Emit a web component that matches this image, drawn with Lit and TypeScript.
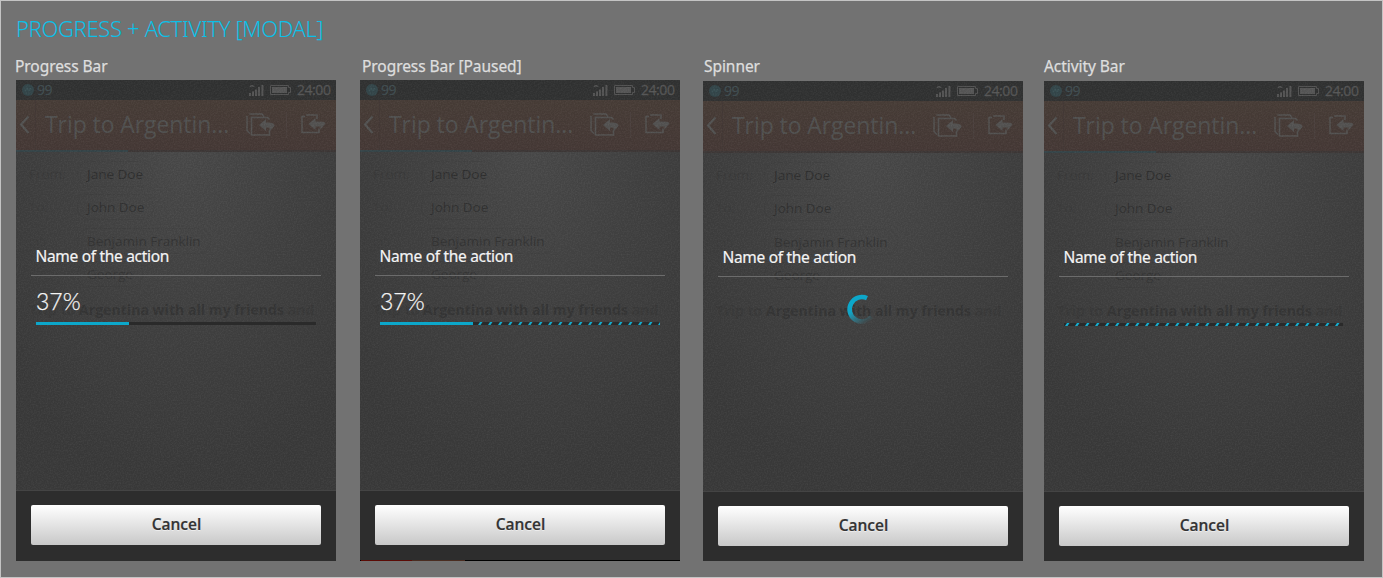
import { LitElement, html, css, svg, nothing } from "lit";
import { customElement, property } from "lit/decorators.js";

type Kind = "progress" | "paused" | "spinner" | "activity";

@customElement("mail-screen")
class MailScreen extends LitElement {
  @property({ type: Boolean }) loading = false;

  static styles = css`
    :host { display: block; height: 100%; background: radial-gradient(ellipse 230px 330px at 52% 17%, #4b4b4b 0%, #424242 50%, #3b3b3b 100%); font-family: "Open Sans", sans-serif; }
    .status { height: 20px; box-sizing: border-box; background: #323333; display: flex; align-items: center; padding: 0 5px 0 6px; font-size: 14px; line-height: 19px; color: #575757; }
    .coin { width: 12px; height: 12px; display: block; margin-right: 3px; }
    .count { color: #425054; flex: 1; letter-spacing: -0.4px; position: relative; top: -1px; -webkit-text-stroke: 0.2px #425054; }
    .signal { width: 15px; height: 12px; margin-right: 6px; }
    .battery { width: 22px; height: 10px; margin-right: 5px; }
    .clock { letter-spacing: -0.45px; width: 34px; white-space: nowrap; position: relative; top: -1px; -webkit-text-stroke: 0.3px #575757; }
    .header { height: 50px; display: flex; align-items: center; background: linear-gradient(#493e38, #473a37); color: #535352; }
    .back { width: 19px; height: 50px; border-right: 1px solid #443936; flex: none; }
    .subject { margin: 0; padding-left: 9px; width: 192px; box-sizing: content-box; font-weight: 400; font-size: 23px; line-height: 48px; height: 50px; white-space: nowrap; letter-spacing: -0.08px; }
    .tools { width: 92px; height: 50px; flex: none; }
    .load { height: 2px; background: #3f3938; }
    .loaded { width: 112px; height: 2px; background: #37464a; }
    .rows { padding: 5px 0 0 13px; font-size: 13.5px; }
    .row { display: flex; height: 33.5px; align-items: center; color: #3d3d3d; }
    .tag { width: 48px; color: #3d3d3d; }
    .pill { border: 1px solid #00000008; border-radius: 12px; padding: 0 9px; line-height: 24px; }
    .n0 { color: #303030; } .n1 { color: #323232; } .n2 { color: #353535; } .n3 { color: #373737; }
    .first { color: #3b3b3b; }
    .message { margin: 0; padding-top: 5px; font-size: 14px; font-weight: 700; line-height: 28px; color: #363636; white-space: nowrap; letter-spacing: 0.05px; }
    .faint { color: #3a3a3a; }
  `;

  render() {
    const rows = [["From:", "Jane Doe"], ["To:", "John Doe"], ["cc:", "Benjamin Franklin"], ["", "George"]];
    return html`
      <div class="status">
        <svg class="coin" viewBox="0 0 12 12"><circle cx="6" cy="6" r="6" fill="#35484c" /><path d="M3 7.5 5 4l2 3 2-3" fill="none" stroke="#3c5458" /></svg>
        <span class="count">99</span>
        <svg class="signal" viewBox="0 0 15 12" fill="#575757"><path d="M0 3.2Q3-1.8 6 3.2L3 2.6Z" /><path d="M0 9h2v3H0zM3 7.5h2V12H3zM6 5.5h2V12H6zM9 3h2v9H9zM12.4 1h2v11h-2z" /></svg>
        <svg class="battery" viewBox="0 0 22 10"><path d="M.5.5h18v2h2v5h-2v2H.5z" fill="none" stroke="#555" /><path d="M2 2h15v6H2z" fill="#585858" /></svg>
        <span class="clock">24:00</span>
      </div>
      <div class="header">
        <svg class="back" viewBox="0 0 19 50"><path d="M12.500 16.500 5 24.600 12.500 33" fill="none" stroke="#555554" stroke-width="2.200" /></svg>
        <h2 class="subject">Trip to Argentin...</h2>
        <svg class="tools" viewBox="221 0 92 50" fill="none" stroke="#555453" stroke-width="1.500">
          <path d="M231 16v14.500l3 3M233.500 14h12.500l2 2.500M253.500 19.500l-2-2H235.500v17.500h18v-5" />
          <path d="m243 25 7-6v3.600q9-.5 8.500 3.500l-5 5.500V27.500h-3.500V31z" fill="#555453" stroke="none" />
          <path d="M270.500 12v26" stroke="#4d423f" stroke-width="1" />
          <path d="M301 19v-4H290M289 16.500h-3V32.500h17v-4" />
          <path d="m292.500 24 7-6v3.600q10-.5 10 2l-5 6v-3.100h-5V30z" fill="#555453" stroke="none" />
        </svg>
      </div>
      ${this.loading ? html`<div class="load"><div class="loaded"></div></div>` : html`<div class="load"></div>`}
      <div class="rows">
        ${rows.map(([tag, name], i) => html`<div class="row"><span class="tag ${i === 0 ? "first" : ""}">${tag}</span><span class="pill n${i}">${name}</span></div>`)}
        <p class="message"><span class="faint">Trip to</span> Argentina with all my friends <span class="faint">and</span></p>
      </div>`;
  }
}

@customElement("modal-card")
class ModalCard extends LitElement {
  @property() kind: Kind = "progress";

  static styles = css`
    :host { display: block; position: relative; width: 320px; height: 100%; overflow: hidden; background: #2d2d2d; font-family: "Noto Sans", sans-serif; }
    .screen { height: 410px; overflow: hidden; }
    .grain { position: absolute; inset: 0; width: 320px; height: 410px; opacity: 0.04; }
    .modal { position: absolute; inset: 0; display: flex; flex-direction: column; }
    .body { height: 410px; box-sizing: border-box; padding: 166px 15px 0; }
    .name { height: 29px; border-bottom: 1px solid #6c6c6c; padding-left: 4.500px; font-size: 15.500px; line-height: 21px; color: #f4f4f4; font-weight: 400; margin: 0; white-space: nowrap; letter-spacing: -0.31px; -webkit-text-stroke: 0.2px #f4f4f4; }
    .percent { padding: 10px 0 0 5px; height: 36px; line-height: 30px; font-family: Lato, sans-serif; font-weight: 300; font-size: 23px; color: #f4f4f4; letter-spacing: 0; -webkit-text-stroke: 0.25px #f4f4f4; }
    .bar { display: block; width: 280px; height: 3px; margin-left: 5px; }
    .spin { display: block; width: 32px; height: 32px; margin: 16px 0 0 127px; }
    .footer { border-top: 1px solid #444; background: #2d2d2d; padding: 14px 15px 0; flex: 1; }
    .cancel { display: block; width: 290px; height: 40px; border: 0; border-radius: 2px; background: linear-gradient(#fff, #c8c8c8); color: #333; font: 600 15.500px/38px "Open Sans", sans-serif; letter-spacing: 0; padding: 0 0 2px 1px; text-shadow: 0 1px 0 #ffffff80; -webkit-text-stroke: 0.2px #333; }
    .sliver { display: flex; height: 1px; background: #000; }
    .red { width: 51px; margin-left: 1px; background: #5b0b05; }
    .brown { width: 53px; background: #4a2c20; }
  `;

  private bar(fill: number, stripes: number | null, length = 280) {
    return html`<svg class="bar" viewBox="0 0 280 3">
      <rect width=${length} height="3" fill="#2a2a2a" />
      ${stripes === null ? nothing : Array.from({ length: Math.ceil((length - stripes) / 10) }, (_, i) => {
        const x = stripes + i * 10;
        return svg`<path d="M${x} 3 ${x + 2} 0h2.500l-2 3z" fill="#14aed0" />`;
      })}
      ${fill ? svg`<rect width=${fill} height="3" fill="#0ca7ca" />` : nothing}
    </svg>`;
  }

  private indicator() {
    switch (this.kind) {
      case "progress": return html`<div class="percent">37%</div>${this.bar(93, null)}`;
      case "paused": return html`<div class="percent">37%</div>${this.bar(93, 98)}`;
      case "activity": return html`<div class="percent"></div>${this.bar(0, 1, 279)}`;
      default: return html`<svg class="spin" viewBox="0 0 32 32">
        <defs><linearGradient id="fade" gradientUnits="userSpaceOnUse" x1="12" y1="8" x2="26" y2="28"><stop offset="0" stop-color="#0ca7ca" /><stop offset=".25" stop-color="#13a3c4" /><stop offset="1" stop-color="#3b8a9c" stop-opacity="0" /></linearGradient></defs>
        <path d="M22 5.100A12.300 12.300 0 1 0 26.500 24" fill="none" stroke="url(#fade)" stroke-width="4.600" />
      </svg>`;
    }
  }

  render() {
    return html`
      <div class="screen"><mail-screen ?loading=${this.kind !== "spinner"}></mail-screen></div>
      <svg class="grain"><filter id="noise" x="0" y="0" width="100%" height="100%" color-interpolation-filters="sRGB"><feTurbulence type="fractalNoise" baseFrequency="0.7" numOctaves="2" /><feColorMatrix type="matrix" values="2 0 0 0 -0.75  2 0 0 0 -0.75  2 0 0 0 -0.75  0 0 0 0 1" /></filter><rect width="320" height="410" filter="url(#noise)" /></svg>
      <div class="modal">
        <div class="body"><h3 class="name">Name of the action</h3>${this.indicator()}</div>
        <div class="footer"><button class="cancel">Cancel</button></div>
        ${this.kind === "paused" ? html`<div class="sliver"><div class="red"></div><div class="brown"></div></div>` : nothing}
      </div>`;
  }
}

@customElement("app-root")
class AppRoot extends LitElement {
  static styles = css`
    :host { display: block; box-sizing: border-box; width: 1383px; height: 578px; border: 1px solid #c4c4c4; background: #727272; font-family: "Noto Sans", sans-serif; overflow: hidden; }
    .title { margin: 0; padding: 11px 0 0 15px; height: 32px; line-height: 32px; font-size: 22px; font-weight: 300; color: #0cc0e8; white-space: nowrap; letter-spacing: -0.34px; }
    .gallery { display: grid; grid-template-columns: 344px 343px 341px 320px; padding-left: 15px; }
    .item { display: flex; flex-direction: column; height: 517px; }
    .label { margin: 0; height: 36px; line-height: 44px; font-size: 15.500px; font-weight: 400; color: #dedede; white-space: nowrap; letter-spacing: -0.06px; -webkit-text-stroke: 0.25px #dedede; }
    .low .label { height: 37px; }
    .card { height: 481px; }
    .low .card { height: 480px; }
    .progress { margin-left: -1px; } .paused { margin-left: 2px; } .spinner { margin-left: 1px; }
  `;

  render() {
    const items: [Kind, string][] = [["progress", "Progress Bar"], ["paused", "Progress Bar [Paused]"], ["spinner", "Spinner"], ["activity", "Activity Bar"]];
    return html`
      <h1 class="title">PROGRESS + ACTIVITY [MODAL]</h1>
      <div class="gallery">
        ${items.map(([kind, label], i) => html`<section class="item ${i > 1 ? "low" : ""}"><h2 class="label ${kind}">${label}</h2><div class="card"><modal-card .kind=${kind}></modal-card></div></section>`)}
      </div>`;
  }
}
